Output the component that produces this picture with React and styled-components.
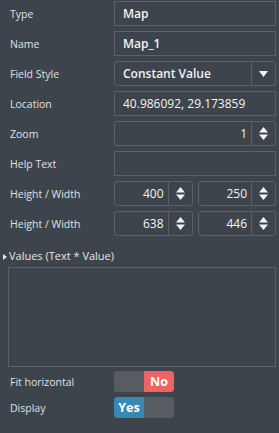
import React from 'react';
import styled, { createGlobalStyle } from 'styled-components';

const GlobalStyle = createGlobalStyle`
  html, body {
    margin: 0;
    padding: 0;
    background: #3e444b;
  }
  body {
    font-family: "Open Sans", "Noto Sans", sans-serif;
  }
`;

const Panel = styled.div`
  width: 279px;
  height: 433px;
  box-sizing: border-box;
  padding: 1px 3px 0 10px;
  display: flex;
  flex-direction: column;
  gap: 5px;
  background: #3e444b;
  color: #e4e6e8;
`;

const Row = styled.div`
  display: flex;
  align-items: center;
  height: ${(p) => p.h || 25}px;
`;

const Label = styled.div`
  width: 104px;
  font-size: 10.5px;
  color: #dfe2e5;
`;

const Field = styled.div`
  flex: 1;
  display: flex;
  gap: 5px;
  height: 100%;
`;

const Box = styled.div`
  flex: 1;
  display: flex;
  align-items: center;
  box-sizing: border-box;
  height: 100%;
  border: 1px solid #5b6168;
  border-radius: ${(p) => (p.round ? 3 : 0)}px;
  background: #3e444b;
  font-size: 12px;
  font-weight: ${(p) => (p.bold ? 600 : 400)};
  color: #f2f3f4;
  overflow: hidden;
`;

const Text = styled.span`
  flex: 1;
  padding: 0 ${(p) => (p.right ? 4 : 8)}px 0 8px;
  text-align: ${(p) => (p.right ? 'right' : 'left')};
  white-space: nowrap;
`;

const Side = styled.div`
  width: 23px;
  height: 100%;
  border-left: 1px solid #5b6168;
  display: flex;
  align-items: center;
  justify-content: center;
`;

const Section = styled.div`
  display: flex;
  align-items: center;
  margin: 7px 0 0 -8px;
  height: 14px;
  font-size: 11px;
  color: #e4e6e8;
`;

const Arrow = styled.span`
  width: 0;
  height: 0;
  border-left: 4px solid #e4e6e8;
  border-top: 3px solid transparent;
  border-bottom: 3px solid transparent;
  margin: 3px 2px 0 1px;
`;

const Area = styled.div`
  margin: 0 0 -1px -2px;
  height: 100px;
  border: 1px solid #5b6168;
  box-sizing: border-box;
`;

const Toggle = styled.div`
  width: 60px;
  height: 21px;
  border-radius: 3px;
  background: #575c63;
  display: flex;
  justify-content: ${(p) => (p.on ? 'flex-start' : 'flex-end')};
  overflow: hidden;
`;

const Knob = styled.div`
  width: 30px;
  height: 100%;
  background: ${(p) => (p.on ? '#3789b4' : '#ef6462')};
  border-radius: ${(p) => (p.on ? '3px 0 0 3px' : '0 3px 3px 0')};
  display: flex;
  align-items: center;
  justify-content: center;
  font-size: 12.5px;
  font-weight: 700;
  color: #fff;
`;

const Caret = () => (
  <svg width="9" height="6" viewBox="0 0 9 6">
    <path d="M0 0h9L4.5 6z" fill="#f2f3f4" />
  </svg>
);

const Spin = () => (
  <svg width="9" height="13" viewBox="0 0 9 13">
    <path d="M4.5 0L9 5.5H0z M0 7.5h9L4.5 13z" fill="#f2f3f4" />
  </svg>
);

const Num = ({ value }) => (
  <Box round>
    <Text right>{value}</Text>
    <Side>
      <Spin />
    </Side>
  </Box>
);

export default function App() {
  return (
    <>
      <GlobalStyle />
      <Panel>
        <Row>
          <Label>Type</Label>
          <Field>
            <Box bold>
              <Text>Map</Text>
            </Box>
          </Field>
        </Row>
        <Row>
          <Label>Name</Label>
          <Field>
            <Box bold>
              <Text>Map_1</Text>
            </Box>
          </Field>
        </Row>
        <Row>
          <Label>Field Style</Label>
          <Field>
            <Box bold round>
              <Text>Constant Value</Text>
              <Side>
                <Caret />
              </Side>
            </Box>
          </Field>
        </Row>
        <Row>
          <Label>Location</Label>
          <Field>
            <Box>
              <Text>40.986092, 29.173859</Text>
            </Box>
          </Field>
        </Row>
        <Row>
          <Label>Zoom</Label>
          <Field>
            <Num value="1" />
          </Field>
        </Row>
        <Row>
          <Label>Help Text</Label>
          <Field>
            <Box>
              <Text />
            </Box>
          </Field>
        </Row>
        <Row>
          <Label>Height / Width</Label>
          <Field>
            <Num value="400" />
            <Num value="250" />
          </Field>
        </Row>
        <Row>
          <Label>Height / Width</Label>
          <Field>
            <Num value="638" />
            <Num value="446" />
          </Field>
        </Row>
        <Section>
          <Arrow />
          Values (Text * Value)
        </Section>
        <Area />
        <Row h={21}>
          <Label>Fit horizontal</Label>
          <Toggle>
            <Knob>No</Knob>
          </Toggle>
        </Row>
        <Row h={21}>
          <Label>Display</Label>
          <Toggle on>
            <Knob on>Yes</Knob>
          </Toggle>
        </Row>
      </Panel>
    </>
  );
}
